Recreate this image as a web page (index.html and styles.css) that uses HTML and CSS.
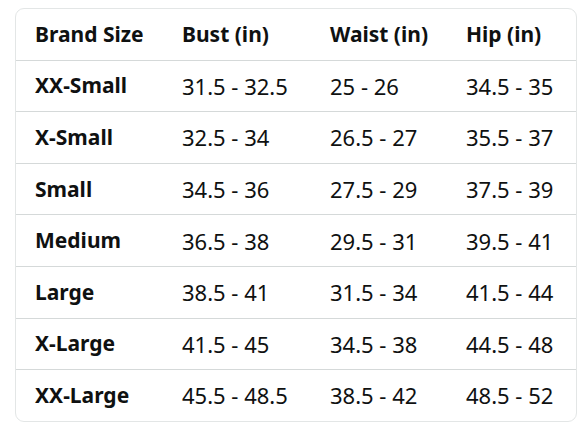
FILE: index.html
```html
<!DOCTYPE html>
<html>
<head>
<meta charset="utf-8">
<link rel="stylesheet" href="styles.css">
</head>
<body>
<div class="wrap">
<table class="size-table">
  <colgroup>
    <col class="c1"><col class="c2"><col class="c3"><col class="c4">
  </colgroup>
  <thead>
    <tr><th>Brand Size</th><th>Bust (in)</th><th>Waist (in)</th><th>Hip (in)</th></tr>
  </thead>
  <tbody>
    <tr><th>XX-Small</th><td>31.5 - 32.5</td><td>25 - 26</td><td>34.5 - 35</td></tr>
    <tr><th>X-Small</th><td>32.5 - 34</td><td>26.5 - 27</td><td>35.5 - 37</td></tr>
    <tr><th>Small</th><td>34.5 - 36</td><td>27.5 - 29</td><td>37.5 - 39</td></tr>
    <tr><th>Medium</th><td>36.5 - 38</td><td>29.5 - 31</td><td>39.5 - 41</td></tr>
    <tr><th>Large</th><td>38.5 - 41</td><td>31.5 - 34</td><td>41.5 - 44</td></tr>
    <tr><th>X-Large</th><td>41.5 - 45</td><td>34.5 - 38</td><td>44.5 - 48</td></tr>
    <tr><th>XX-Large</th><td>45.5 - 48.5</td><td>38.5 - 42</td><td>48.5 - 52</td></tr>
  </tbody>
</table>
</div>
</body>
</html>
```

FILE: styles.css
```css
html, body {
  margin: 0;
  padding: 0;
  background: #ffffff;
}
body {
  font-family: "Noto Sans", "Liberation Sans", sans-serif;
  color: #0f1111;
}
.wrap {
  margin: 8px 11px 0 15px;
  width: 562px;
  box-sizing: border-box;
  border: 1px solid #e3e6e6;
  border-radius: 9px;
  overflow: hidden;
}
.size-table {
  width: 100%;
  border-collapse: collapse;
  table-layout: fixed;
}
.c1 { width: 147px; }
.c2 { width: 148px; }
.c3 { width: 136px; }
.c4 { width: 129px; }
.size-table th,
.size-table td {
  height: 50.6px;
  padding: 0 0 0 19px;
  text-align: left;
  vertical-align: middle;
  font-size: 21px;
  line-height: 1;
  white-space: nowrap;
  border-bottom: 1px solid #d5d9d9;
}
.size-table th {
  font-weight: 700;
}
.size-table td {
  font-weight: 400;
  font-size: 22px;
}
.size-table tbody tr:last-child th,
.size-table tbody tr:last-child td {
  border-bottom: none;
}
```
